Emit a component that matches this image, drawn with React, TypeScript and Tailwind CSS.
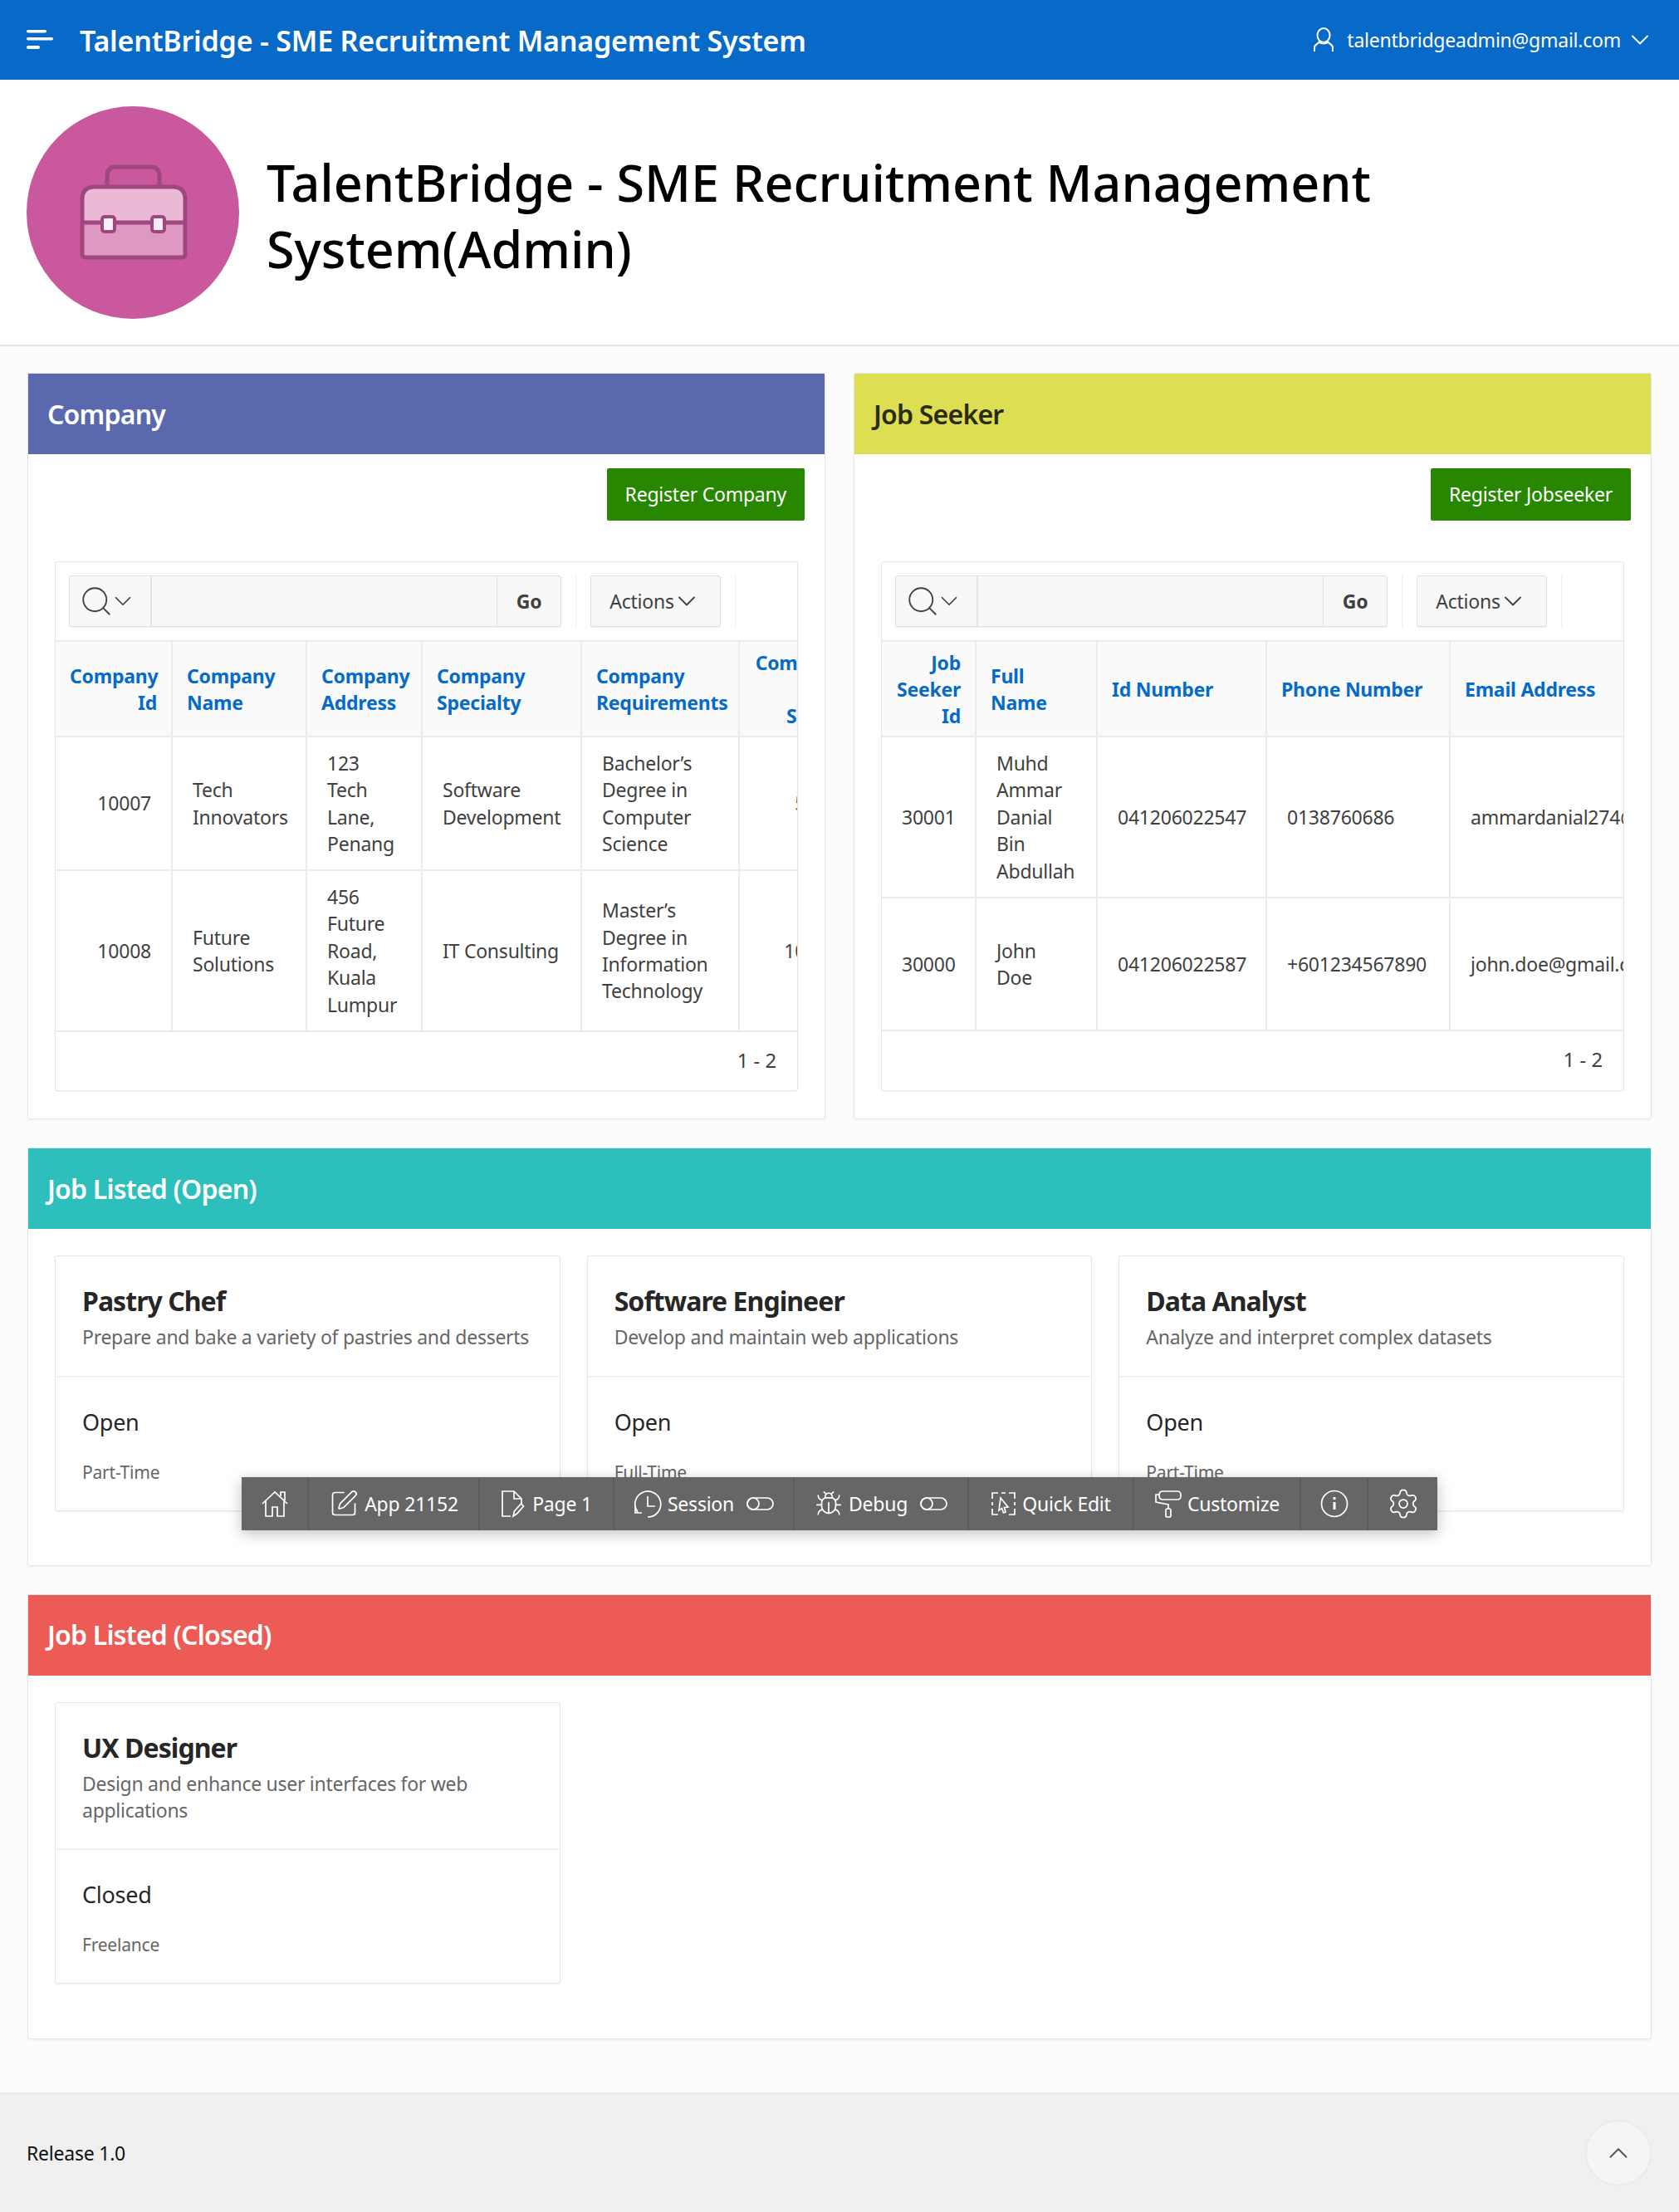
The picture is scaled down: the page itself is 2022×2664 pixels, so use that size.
import { Bug, ChevronDown, ChevronUp, Search, Settings, SquarePen } from "lucide-react";

type Column = { width: string; label: string; align?: "right" };

const companyColumns: Column[] = [
	{ width: "w-[140px]", label: "Company\nId", align: "right" },
	{ width: "w-[162px]", label: "Company\nName" },
	{ width: "w-[139px]", label: "Company\nAddress" },
	{ width: "w-[192px]", label: "Company\nSpecialty" },
	{ width: "w-[190px]", label: "Company\nRequirements" },
	{ width: "w-[144px]", label: "Company\nJob\nSalary", align: "right" },
];

const companyRows = [
	{ h: "h-[161px]", cells: ["10007", "Tech\nInnovators", "123\nTech\nLane,\nPenang", "Software\nDevelopment", "Bachelor’s\nDegree in\nComputer\nScience", "5000"] },
	{ h: "h-[194px]", cells: ["10008", "Future\nSolutions", "456\nFuture\nRoad,\nKuala\nLumpur", "IT Consulting", "Master’s\nDegree in\nInformation\nTechnology", "10000"] },
];

const seekerColumns: Column[] = [
	{ width: "w-[113px]", label: "Job\nSeeker\nId", align: "right" },
	{ width: "w-[146px]", label: "Full\nName" },
	{ width: "w-[204px]", label: "Id Number" },
	{ width: "w-[221px]", label: "Phone Number" },
	{ width: "w-[260px]", label: "Email Address" },
];

const seekerRows = [
	{ h: "h-[194px]", cells: ["30001", "Muhd\nAmmar\nDanial\nBin\nAbdullah", "041206022547", "0138760686", "ammardanial274@gmail.com"] },
	{ h: "h-[160px]", cells: ["30000", "John\nDoe", "041206022587", "+601234567890", "john.doe@gmail.com"] },
];

function ToggleGlyph() {
	return (
		<svg width="33" height="16" viewBox="0 0 33 16" fill="none" stroke="currentColor" strokeWidth="1.7" className="shrink-0">
			<rect x="1" y="1" width="31" height="14" rx="7" />
			<circle cx="8" cy="8" r="7" />
		</svg>
	);
}

function SessionGlyph() {
	return (
		<svg width="34" height="34" viewBox="0 0 34 34" fill="none" stroke="currentColor" strokeWidth="1.7" className="shrink-0">
			<path d="M5 27A15.5 15.5 0 1 1 17 33" />
			<path d="M17 8v12h9" />
			<path d="M2 21v7h8" />
		</svg>
	);
}

function HouseGlyph() {
	return (
		<svg width="34" height="34" viewBox="0 0 34 34" fill="none" stroke="currentColor" strokeWidth="1.7" className="shrink-0">
			<path d="M2 17 17 3l15 14" />
			<path d="M6 14v18h8V21h6v11h8V14" />
			<path d="M24 8V3h5v10" />
		</svg>
	);
}

function PageGlyph() {
	return (
		<svg width="31" height="34" viewBox="0 0 31 34" fill="none" stroke="currentColor" strokeWidth="1.7" className="shrink-0">
			<path d="M12 32H2V2h14l9 9v7" />
			<path d="M16 2v9h9" />
			<path d="M15 32l1.5-6 8-9 3 3-8 9z" />
		</svg>
	);
}

function QuickEditGlyph() {
	return (
		<svg width="31" height="30" viewBox="0 0 31 30" fill="none" stroke="currentColor" strokeWidth="1.7" className="shrink-0">
			<path d="M2 9V2h7M13 2h5M22 2h7v7M29 13v4M29 21v7h-7M9 28H2v-7M2 17v-4" />
			<path d="M12 8l9 11-4.5.5L18 25l-2.5 1-2-5.5L10 23z" />
		</svg>
	);
}

function RollerGlyph() {
	return (
		<svg width="33" height="34" viewBox="0 0 33 34" fill="none" stroke="currentColor" strokeWidth="1.7" className="shrink-0">
			<rect x="6" y="2" width="26" height="10" rx="4" />
			<path d="M6 6H2v9l15 3v5" />
			<rect x="14" y="23" width="6" height="10" rx="2" />
		</svg>
	);
}

function InfoGlyph() {
	return (
		<svg width="34" height="34" viewBox="0 0 34 34" fill="none" stroke="currentColor" strokeWidth="1.7" className="shrink-0">
			<circle cx="17" cy="17" r="15.5" />
			<path d="M17 15v9" strokeWidth="3" />
			<path d="M17 9v3" strokeWidth="3" />
		</svg>
	);
}

function UserGlyph() {
	return (
		<svg width="26" height="30" viewBox="0 0 26 30" fill="none" stroke="currentColor" strokeWidth="2" className="shrink-0">
			<ellipse cx="13" cy="9.5" rx="7.5" ry="8.5" />
			<path d="M8 16c1 3-6 4-6 8v5M18 16c-1 3 6 4 6 8v5M8 18c2 2 8 2 10 0" />
		</svg>
	);
}

function Briefcase() {
	return (
		<svg width="256" height="256" viewBox="0 0 256 256" fill="none">
			<circle cx="128" cy="128" r="128" fill="#ca589d" />
			<path d="M97 98V84q0-11 11-11h41q11 0 11 11v14" stroke="#a0467f" strokeWidth="5" />
			<path d="M67 140V112q0-15 15-15h94q15 0 15 15v28z" fill="#e9b9d6" />
			<path d="M67 140h124v38q0 4-4 4H71q-4 0-4-4z" fill="#df97c4" />
			<path d="M67 140V112q0-15 15-15h94q15 0 15 15v66q0 4-4 4H71q-4 0-4-4zM67 140h124" stroke="#a0467f" strokeWidth="5" />
			<rect x="91" y="133" width="15" height="18" rx="3" fill="#f9eef5" stroke="#a0467f" strokeWidth="4" />
			<rect x="151" y="133" width="15" height="18" rx="3" fill="#f9eef5" stroke="#a0467f" strokeWidth="4" />
		</svg>
	);
}

function ReportToolbar() {
	return (
		<div className="flex h-[94px] items-center pl-[16px]">
			<div className="flex h-[62px] w-[593px] rounded-[3px] border border-[#e0e0e0] bg-[#f8f8f8] shadow-[0_1px_1px_rgba(0,0,0,0.06)]">
				<div className="flex w-[99px] items-center border-r-2 border-[#e4e4e4] pl-[11px] text-[#404040]">
					<Search size={42} strokeWidth={1.05} className="shrink-0" />
					<ChevronDown size={34} strokeWidth={1.2} className="-ml-[6px] shrink-0" />
				</div>
				<div className="flex-1" />
				<div className="flex w-[77px] items-center justify-center border-l border-[#e4e4e4] text-[23px] font-bold tracking-[-0.01em] text-[#404040]">Go</div>
			</div>
			<div className="ml-[17px] h-[62px] w-px bg-[#eeeeee]" />
			<div className="ml-[17px] flex h-[62px] w-[157px] items-center justify-center rounded-[3px] border border-[#e0e0e0] bg-[#f8f8f8] text-[23px] tracking-[-0.01em] text-[#404040] shadow-[0_1px_1px_rgba(0,0,0,0.06)]">
				Actions
				<ChevronDown size={36} strokeWidth={1.2} className="-ml-[3px] shrink-0" />
			</div>
			<div className="ml-[17px] h-[62px] w-px bg-[#eeeeee]" />
		</div>
	);
}

function ReportTable({ columns, rows, width }: { columns: Column[]; rows: { h: string; cells: string[] }[]; width: string }) {
	return (
		<div className="h-[638px] overflow-hidden rounded-[3px] border border-[#e6e6e6] bg-white shadow-[0_1px_2px_rgba(0,0,0,0.05)]">
			<ReportToolbar />
			<table className={`table-fixed border-collapse ${width}`}>
				<colgroup>
					{columns.map((column) => (
						<col key={column.label} className={column.width} />
					))}
				</colgroup>
				<thead>
					<tr className="h-[115px] border-y-2 border-[#ebebeb] bg-[#fafafa]">
						{columns.map((column) => (
							<th
								key={column.label}
								className={`whitespace-pre-line border-r-2 border-[#ebebeb] px-[17px] text-[23px] leading-[32px] font-bold tracking-[-0.01em] text-[#056ac8] ${
									column.align === "right" ? "text-right" : "text-left"
								}`}
							>
								{column.label}
							</th>
						))}
					</tr>
				</thead>
				<tbody>
					{rows.map((row) => (
						<tr key={row.cells[0]} className={`${row.h} border-b-2 border-[#ebebeb]`}>
							{row.cells.map((cell, index) => (
								<td
									key={index}
									className={`whitespace-pre-line border-r-2 border-[#ebebeb] px-[24px] text-[23px] leading-[32.4px] tracking-[-0.01em] text-[#404040] ${
										columns[index].align === "right" ? "text-right" : "text-left"
									}`}
								>
									{cell}
								</td>
							))}
						</tr>
					))}
				</tbody>
			</table>
			<div className="flex h-[70px] items-center justify-end pr-[25px] text-[23.8px] text-[#404040]">1 - 2</div>
		</div>
	);
}

function Region({ title, color, dark, button, children }: { title: string; color: string; dark?: boolean; button?: string; children: React.ReactNode }) {
	return (
		<section className="min-w-0 flex-1 rounded-[3px] border border-[#e6e6e6] bg-white shadow-[0_1px_3px_rgba(0,0,0,0.06)]">
			<header className={`flex h-[97px] items-center px-[23px] text-[32px] font-semibold tracking-[-0.025em] ${color} ${dark ? "text-[#2b2b12]" : "text-white"}`}>{title}</header>
			{button && (
				<div className="flex h-[129px] items-start justify-end pt-[17px] pr-[24px]">
					<button type="button" className="flex h-[63px] items-center rounded-[2px] bg-[#278701] px-[22px] text-[23px] tracking-[-0.01em] text-white">
						{button}
					</button>
				</div>
			)}
			{children}
		</section>
	);
}

function JobCard({ title, description, status, kind, tall }: { title: string; description: string; status: string; kind: string; tall?: boolean }) {
	return (
		<div className={`flex-1 overflow-hidden rounded-[3px] border border-[#e6e6e6] bg-white shadow-[0_1px_2px_rgba(0,0,0,0.06)] ${tall ? "h-[339px]" : "h-[308px]"}`}>
			<div className={`border-b-2 border-[#f2f2f2] px-[32px] pt-[32px] ${tall ? "h-[177px]" : "h-[146px]"}`}>
				<div className="text-[32px] leading-[44px] font-bold tracking-[-0.03em] text-[#262626]">{title}</div>
				<div className="mt-[5px] text-[23px] leading-[32.4px] tracking-[-0.012em] text-[#666666]">{description}</div>
			</div>
			<div className="px-[32px] pt-[32px]">
				<div className="text-[27px] leading-[44px] tracking-[-0.01em] text-[#262626]">{status}</div>
				<div className="mt-[22px] text-[21px] leading-[32px] tracking-[-0.01em] text-[#666666]">{kind}</div>
			</div>
		</div>
	);
}

function DevItem({ width, icon, label, trailing }: { width: string; icon: React.ReactNode; label?: string; trailing?: boolean }) {
	return (
		<div className={`flex h-full items-center justify-center gap-[7px] border-r-2 border-[#5c5c5c] last:border-r-0 ${width}`}>
			{icon}
			{label && <span>{label}</span>}
			{trailing && (
				<span className="ml-[8px]">
					<ToggleGlyph />
				</span>
			)}
		</div>
	);
}

function DevToolbar() {
	return (
		<div className="absolute top-[1779px] left-[291px] flex h-[64px] w-[1440px] bg-[#666666] text-[23px] tracking-[-0.01em] text-white shadow-[0_4px_16px_rgba(0,0,0,0.25)]">
			<DevItem width="w-[81px]" icon={<HouseGlyph />} />
			<DevItem width="w-[206px]" icon={<SquarePen size={36} strokeWidth={1.15} />} label="App 21152" />
			<DevItem width="w-[162px]" icon={<PageGlyph />} label="Page 1" />
			<DevItem width="w-[217px]" icon={<SessionGlyph />} label="Session" trailing />
			<DevItem width="w-[210px]" icon={<Bug size={34} strokeWidth={1.2} />} label="Debug" trailing />
			<DevItem width="w-[199px]" icon={<QuickEditGlyph />} label="Quick Edit" />
			<DevItem width="w-[201px]" icon={<RollerGlyph />} label="Customize" />
			<DevItem width="w-[81px]" icon={<InfoGlyph />} />
			<DevItem width="w-[83px]" icon={<Settings size={40} strokeWidth={1.05} />} />
		</div>
	);
}

export default function App() {
	return (
		<div className="relative flex min-h-[2664px] flex-col bg-[#fcfcfc] font-['Noto_Sans',sans-serif]">
			<header className="flex h-[96px] items-center bg-[#076ac9] text-white shadow-[0_2px_6px_rgba(0,0,0,0.1)]">
				<svg width="32" height="24" viewBox="0 0 32 24" className="ml-[32px] shrink-0" fill="#ffffff">
					<rect x="0" y="0" width="24" height="3.5" rx="1.7" />
					<rect x="0" y="9" width="32" height="3.5" rx="1.7" />
					<rect x="0" y="19" width="16" height="4" rx="2" />
				</svg>
				<div className="ml-[32px] pt-[2px] text-[34px] font-semibold tracking-[-0.006em]">TalentBridge - SME Recruitment Management System</div>
				<div className="ml-auto flex items-center pr-[29px] text-[23px] tracking-[-0.01em]">
					<UserGlyph />
					<span className="ml-[15px]">talentbridgeadmin@gmail.com</span>
					<ChevronDown size={36} strokeWidth={1.3} className="ml-[5px]" />
				</div>
			</header>

			<div className="flex h-[321px] items-center border-b-2 border-[#e3e3e3] bg-white pl-[32px]">
				<Briefcase />
				<h1 className="ml-[33px] w-[1400px] pt-[8px] text-[61px] leading-[80px] font-medium text-black">TalentBridge - SME Recruitment Management System(Admin)</h1>
			</div>

			<main className="flex flex-1 flex-col gap-[34px] px-[33px] pt-[32px]">
				<div className="flex gap-[34px]">
					<Region title="Company" color="bg-[#5a69ae]" button="Register Company">
						<div className="h-[671px] px-[32px]">
							<ReportTable columns={companyColumns} rows={companyRows} width="w-[967px]" />
						</div>
					</Region>
					<Region title="Job Seeker" color="bg-[#dede52]" dark button="Register Jobseeker">
						<div className="h-[671px] px-[32px]">
							<ReportTable columns={seekerColumns} rows={seekerRows} width="w-[944px]" />
						</div>
					</Region>
				</div>
				<Region title="Job Listed (Open)" color="bg-[#2dbfbc]">
					<div className="flex h-[404px] gap-[32px] px-[32px] pt-[32px]">
						<JobCard title="Pastry Chef" description="Prepare and bake a variety of pastries and desserts" status="Open" kind="Part-Time" />
						<JobCard title="Software Engineer" description="Develop and maintain web applications" status="Open" kind="Full-Time" />
						<JobCard title="Data Analyst" description="Analyze and interpret complex datasets" status="Open" kind="Part-Time" />
					</div>
				</Region>
				<Region title="Job Listed (Closed)" color="bg-[#ec5b55]">
					<div className="flex h-[437px] gap-[32px] px-[32px] pt-[32px]">
						<div className="w-[609px]">
							<JobCard tall title="UX Designer" description="Design and enhance user interfaces for web applications" status="Closed" kind="Freelance" />
						</div>
					</div>
				</Region>
			</main>

			<footer className="mt-[64px] flex h-[144px] shrink-0 items-center justify-between border-t-2 border-[#e8e8e8] bg-[#f0f0f0] pr-[33px] pl-[32px]">
				<span className="text-[23px] tracking-[-0.01em] text-[#111111]">Release 1.0</span>
				<div className="flex h-[80px] w-[80px] items-center justify-center rounded-full border-2 border-[#ebebeb] bg-[#f5f5f5] text-[#555555]">
					<ChevronUp size={38} strokeWidth={1.2} />
				</div>
			</footer>

			<DevToolbar />
		</div>
	);
}
